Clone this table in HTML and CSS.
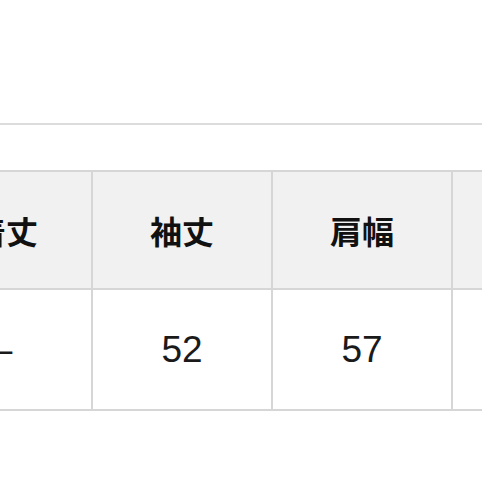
FILE: index.html
```html
<!DOCTYPE html>
<html lang="ja">
<head>
<meta charset="utf-8">
<link rel="stylesheet" href="styles.css">
</head>
<body>
<div class="page">
  <div class="rule"></div>
  <div class="table-wrap">
    <table class="size-table">
      <colgroup>
        <col class="col"><col class="col"><col class="col"><col class="col">
      </colgroup>
      <thead>
        <tr>
          <th class="first">着丈</th>
          <th>袖丈</th>
          <th>肩幅</th>
          <th>身幅</th>
        </tr>
      </thead>
      <tbody>
        <tr>
          <td>–</td>
          <td>52</td>
          <td>57</td>
          <td>60</td>
        </tr>
      </tbody>
    </table>
  </div>
</div>
</body>
</html>
```
FILE: styles.css
```css
html, body {
  margin: 0;
  padding: 0;
  background: #ffffff;
  overflow: hidden;
}
.page {
  width: 482px;
  height: 482px;
  padding-top: 123px;
  box-sizing: border-box;
  overflow: hidden;
}
.rule {
  height: 2px;
  background: #dcdcdc;
}
.table-wrap {
  margin-top: 45px;
  margin-left: -89px;
}
.size-table {
  border-collapse: collapse;
  table-layout: fixed;
  width: 720px;
}
.col {
  width: 180px;
}
.size-table th,
.size-table td {
  border: 2px solid #d6d6d6;
  text-align: center;
  vertical-align: middle;
  padding: 0;
}
.size-table th {
  height: 116px;
  background: #f1f1f1;
  font-family: "Noto Sans CJK JP", sans-serif;
  font-weight: 700;
  font-size: 32px;
  color: #111111;
}
.size-table th.first {
  padding-left: 8px;
}
.size-table td {
  height: 119px;
  background: #ffffff;
  font-family: "Liberation Sans", Arial, sans-serif;
  font-size: 37px;
  color: #1a1a1a;
}
```
